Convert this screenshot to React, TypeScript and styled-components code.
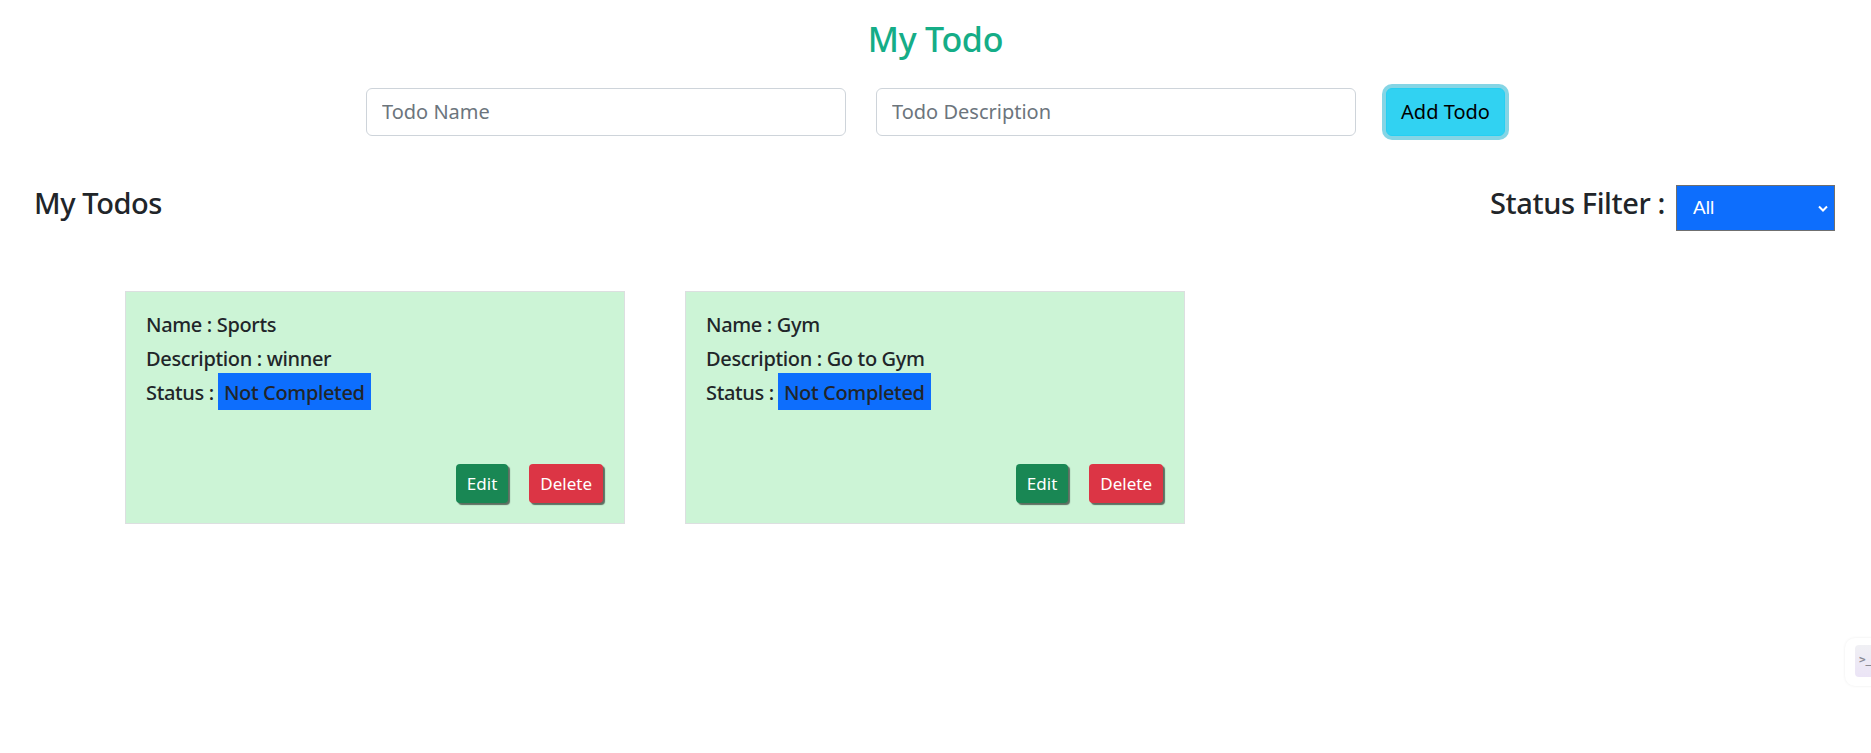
import styled, { createGlobalStyle } from 'styled-components';

interface Todo {
  name: string;
  description: string;
  status: string;
}

const todos: Todo[] = [
  { name: 'Sports', description: 'winner', status: 'Not Completed' },
  { name: 'Gym', description: 'Go to Gym', status: 'Not Completed' },
];

const GlobalStyle = createGlobalStyle`
  body {
    margin: 0;
    background: #fff;
    color: #212529;
    font-family: "Noto Sans", "Open Sans", sans-serif;
  }
  * { box-sizing: border-box; }
`;

const Page = styled.div`
  min-height: 753px;
`;

const Title = styled.h1`
  margin: 19px 0 28px;
  text-align: center;
  font-size: 34px;
  font-weight: 500;
  letter-spacing: -0.3px;
  line-height: 1.2;
  color: #15ad87;
`;

const AddForm = styled.form`
  display: flex;
  justify-content: center;
  gap: 30px;
`;

const Field = styled.input`
  width: 480px;
  height: 48px;
  padding: 0 15px;
  border: 1px solid #ced4da;
  border-radius: 6px;
  font-family: inherit;
  font-size: 20px;
  color: #212529;
  background: #fff;

  &::placeholder {
    color: #6c757d;
  }
`;

const AddButton = styled.button`
  width: 119px;
  height: 48px;
  border: 1px solid #25cff2;
  border-radius: 6px;
  background: #31d2f2;
  color: #000;
  font-family: inherit;
  font-size: 20px;
  box-shadow: 0 0 0 4px rgba(11, 172, 204, 0.5);
  cursor: pointer;
`;

const ListHeader = styled.div`
  display: flex;
  justify-content: space-between;
  align-items: baseline;
  padding: 0 36px 0 34px;
  margin-top: 49px;
`;

const SubTitle = styled.h3`
  margin: 0;
  font-size: 29px;
  font-weight: 500;
  letter-spacing: -0.4px;
  line-height: 1.2;
`;

const FilterGroup = styled.div`
  display: flex;
  align-items: baseline;
  gap: 11px;
`;

const SelectWrap = styled.div`
  position: relative;
`;

const FilterSelect = styled.select`
  appearance: none;
  width: 159px;
  height: 46px;
  padding: 0 30px 0 16px;
  border: 1px solid #6f6f6f;
  border-radius: 0;
  background: #0d6efd;
  color: #fff;
  font-family: "Liberation Sans", Arial, sans-serif;
  font-size: 19px;
`;

const Chevron = styled.svg`
  position: absolute;
  right: 7px;
  top: 20px;
  pointer-events: none;
`;

const CardRow = styled.div`
  display: flex;
  gap: 60px;
  padding-left: 125px;
  margin-top: 60px;
`;

const Card = styled.div`
  width: 500px;
  height: 233px;
  display: flex;
  flex-direction: column;
  justify-content: space-between;
  padding: 21px 20px 20px;
  background: #ccf4d6;
  border: 1px solid #dcdfe0;
`;

const Line = styled.h5`
  margin: 0 0 10px;
  font-size: 20px;
  font-weight: 500;
  letter-spacing: -0.35px;
  line-height: 24px;
`;

const StatusTag = styled.span`
  margin-left: 4px;
  padding: 6px 6px 4px;
  background: #0d6efd;
  color: #212529;
`;

const Actions = styled.div`
  display: flex;
  justify-content: flex-end;
  gap: 21px;
  margin-right: 1px;
`;

const ActionButton = styled.button<{ $tone: 'edit' | 'delete' }>`
  height: 39px;
  padding: 0 11px;
  border: none;
  border-radius: 4px;
  font-family: inherit;
  font-size: 17px;
  color: #fff;
  background: ${(p) => (p.$tone === 'edit' ? '#198754' : '#dc3545')};
  box-shadow: 2px 2px 1px rgba(0, 0, 0, 0.55);
  cursor: pointer;
`;

const DevWidget = styled.div`
  position: fixed;
  left: 1845px;
  top: 638px;
  width: 40px;
  height: 48px;
  padding: 7px 0 0 10px;
  background: #fff;
  border-radius: 10px;
  box-shadow: 0 0 3px rgba(0, 0, 0, 0.08);
`;

const WidgetIcon = styled.div`
  width: 26px;
  height: 32px;
  border-radius: 4px;
  background: linear-gradient(180deg, #f0f0f4 0%, #ebe4f6 100%);
  color: #8b8b95;
  font-family: "DejaVu Sans Mono", monospace;
  font-size: 11px;
  font-weight: bold;
  line-height: 30px;
  padding-left: 4px;
`;

const App = () => {
  return (
    <Page>
      <GlobalStyle />
      <Title>My Todo</Title>
      <AddForm onSubmit={(e) => e.preventDefault()}>
        <Field placeholder="Todo Name" />
        <Field placeholder="Todo Description" />
        <AddButton type="submit">Add Todo</AddButton>
      </AddForm>

      <ListHeader>
        <SubTitle>My Todos</SubTitle>
        <FilterGroup>
          <SubTitle>Status Filter :</SubTitle>
          <SelectWrap>
            <FilterSelect defaultValue="all">
              <option value="all">All</option>
              <option value="completed">Completed</option>
              <option value="not">Not Completed</option>
            </FilterSelect>
            <Chevron width="10" height="7" viewBox="0 0 10 7">
              <polyline points="1,1.5 5,5.5 9,1.5" fill="none" stroke="#fff" strokeWidth="2" />
            </Chevron>
          </SelectWrap>
        </FilterGroup>
      </ListHeader>

      <CardRow>
        {todos.map((todo) => (
          <Card key={todo.name}>
            <div>
              <Line>Name : {todo.name}</Line>
              <Line>Description : {todo.description}</Line>
              <Line>
                Status :<StatusTag>{todo.status}</StatusTag>
              </Line>
            </div>
            <Actions>
              <ActionButton $tone="edit">Edit</ActionButton>
              <ActionButton $tone="delete">Delete</ActionButton>
            </Actions>
          </Card>
        ))}
      </CardRow>

      <DevWidget>
        <WidgetIcon>&gt;_</WidgetIcon>
      </DevWidget>
    </Page>
  );
};

export default App;
